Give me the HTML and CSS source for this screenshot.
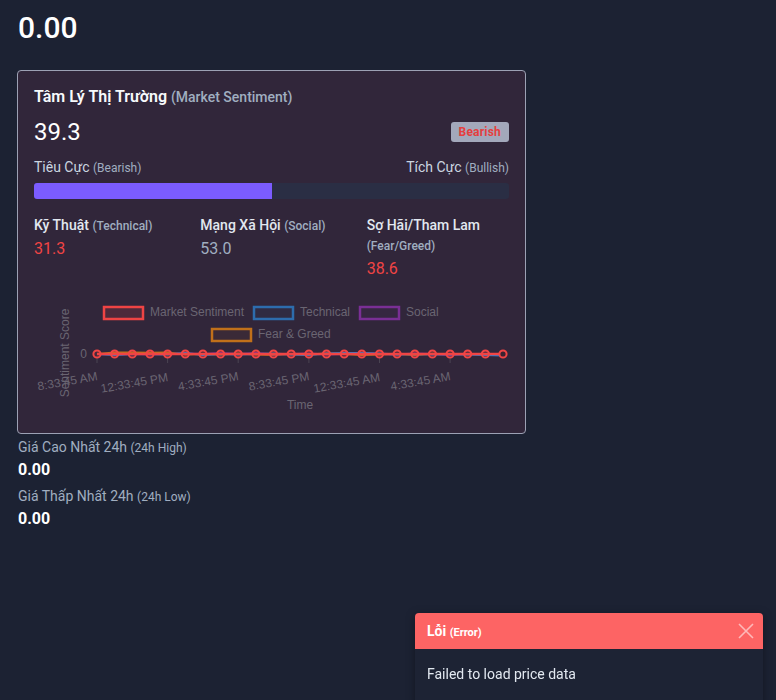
FILE: index.html
```html
<!DOCTYPE html>
<html lang="vi">
<head>
<meta charset="utf-8">
<title>Market</title>
<link rel="stylesheet" href="styles.css">
</head>
<body>
<main class="page">
  <h1 class="price">0.00</h1>

  <section class="card">
    <h2 class="card-title">Tâm Lý Thị Trường <span class="sub">(Market Sentiment)</span></h2>
    <div class="score-row">
      <span class="score">39.3</span>
      <span class="badge">Bearish</span>
    </div>
    <div class="scale-labels">
      <span>Tiêu Cực <small>(Bearish)</small></span>
      <span>Tích Cực <small>(Bullish)</small></span>
    </div>
    <div class="bar"><div class="bar-fill" style="width:50.1%"></div></div>

    <div class="metrics">
      <div class="metric">
        <div class="metric-label">Kỹ Thuật <small>(Technical)</small></div>
        <div class="metric-value red">31.3</div>
      </div>
      <div class="metric">
        <div class="metric-label">Mạng Xã Hội <small>(Social)</small></div>
        <div class="metric-value gray">53.0</div>
      </div>
      <div class="metric">
        <div class="metric-label">Sợ Hãi/Tham Lam <small>(Fear/Greed)</small></div>
        <div class="metric-value red">38.6</div>
      </div>
    </div>

    <svg class="chart" width="475" height="126" viewBox="0 0 475 126" xmlns="http://www.w3.org/2000/svg">
      <g font-family="Liberation Sans, Arial, sans-serif" font-size="12" fill="#6a6572">
        <rect x="70" y="16" width="39" height="12" fill="rgba(240,70,70,0.15)" stroke="#ef4444" stroke-width="2.5"/>
        <text x="116" y="25">Market Sentiment</text>
        <rect x="220" y="16" width="39" height="12" fill="rgba(40,100,170,0.08)" stroke="#2d6cad" stroke-width="2.5"/>
        <text x="266" y="25">Technical</text>
        <rect x="326" y="16" width="39" height="12" fill="rgba(120,50,150,0.08)" stroke="#7a2f95" stroke-width="2.5"/>
        <text x="372" y="25">Social</text>
        <rect x="178" y="38" width="39" height="12" fill="rgba(200,120,20,0.06)" stroke="#c0701a" stroke-width="2.5"/>
        <text x="224" y="47">Fear &amp; Greed</text>

        <text x="53" y="67" text-anchor="end">0</text>
        <text transform="translate(35 62) rotate(-90)" text-anchor="middle">Sentiment Score</text>
        <text x="266" y="118" text-anchor="middle">Time</text>

        <g text-anchor="end">
          <text transform="translate(64 89) rotate(-10)">8:33:45 AM</text>
          <text transform="translate(134.6 90) rotate(-10)">12:33:45 PM</text>
          <text transform="translate(205.2 89) rotate(-10)">4:33:45 PM</text>
          <text transform="translate(275.9 89) rotate(-10)">8:33:45 PM</text>
          <text transform="translate(346.5 90) rotate(-10)">12:33:45 AM</text>
          <text transform="translate(417.1 89) rotate(-10)">4:33:45 AM</text>
        </g>
      </g>
      <g stroke="#4a4452" stroke-width="1">
        <line x1="63" y1="66" x2="63" y2="72"/>
        <line x1="133.6" y1="66" x2="133.6" y2="72"/>
        <line x1="204.2" y1="66" x2="204.2" y2="72"/>
        <line x1="274.9" y1="66" x2="274.9" y2="72"/>
        <line x1="345.5" y1="66" x2="345.5" y2="72"/>
        <line x1="416.1" y1="66" x2="416.1" y2="72"/>
      </g>
      <g fill="none" stroke-width="2" stroke-linejoin="round">
        <polyline stroke="#c0701a" points="63,63 80.6,61.5 98.3,61.5 116,61.8 133.6,61.5 151.3,63.5 168.9,63 186.6,63.5 204.2,62.5 221.9,63.5 239.5,64 257.2,63 274.9,63.5 292.5,62.5 310.2,63 327.8,64 345.5,63.5 363.1,63 380.8,64 398.4,62.8 416.1,63.5 433.7,63 451.4,63.2 469,63"/>
        <polyline stroke="#7a2f95" points="63,63 80.6,63.5 98.3,63 116,63.5 133.6,63 151.3,62.5 168.9,63 186.6,62 204.2,63 221.9,62 239.5,63.5 257.2,63 274.9,62.5 292.5,63.5 310.2,63 327.8,62.5 345.5,63 363.1,63.5 380.8,62.5 398.4,63 416.1,64 433.7,63 451.4,63.5 469,63"/>
        <polyline stroke="#2d7fcf" points="63,63 80.6,64 98.3,63 116,63 133.6,63.5 151.3,62 168.9,64 186.6,63 204.2,63.5 221.9,63 239.5,62.5 257.2,63.5 274.9,64 292.5,62.5 310.2,62 327.8,62 345.5,62.5 363.1,63.5 380.8,63 398.4,63.5 416.1,63 433.7,63.5 451.4,64 469,64.5"/>
        <polyline stroke="#f04545" stroke-width="2.5" points="63,63 80.6,63 98.3,63 116,63 133.6,63 151.3,63 168.9,63 186.6,63 204.2,63 221.9,63 239.5,63 257.2,63 274.9,63 292.5,63 310.2,63 327.8,63 345.5,63 363.1,63 380.8,63 398.4,63 416.1,63 433.7,63 451.4,63 469,63"/>
      </g>
      <g fill="rgba(240,69,69,0.12)" stroke="#f04545" stroke-width="2">
        <circle cx="63" cy="63" r="3.6"/><circle cx="80.6" cy="63" r="3.6"/><circle cx="98.3" cy="63" r="3.6"/><circle cx="116" cy="63" r="3.6"/>
        <circle cx="133.6" cy="63" r="3.6"/><circle cx="151.3" cy="63" r="3.6"/><circle cx="168.9" cy="63" r="3.6"/><circle cx="186.6" cy="63" r="3.6"/>
        <circle cx="204.2" cy="63" r="3.6"/><circle cx="221.9" cy="63" r="3.6"/><circle cx="239.5" cy="63" r="3.6"/><circle cx="257.2" cy="63" r="3.6"/>
        <circle cx="274.9" cy="63" r="3.6"/><circle cx="292.5" cy="63" r="3.6"/><circle cx="310.2" cy="63" r="3.6"/><circle cx="327.8" cy="63" r="3.6"/>
        <circle cx="345.5" cy="63" r="3.6"/><circle cx="363.1" cy="63" r="3.6"/><circle cx="380.8" cy="63" r="3.6"/><circle cx="398.4" cy="63" r="3.6"/>
        <circle cx="416.1" cy="63" r="3.6"/><circle cx="433.7" cy="63" r="3.6"/><circle cx="451.4" cy="63" r="3.6"/><circle cx="469" cy="63" r="3.6" fill="#3a2330"/>
      </g>
    </svg>
  </section>

  <div class="stat">
    <div class="stat-label">Giá Cao Nhất 24h <small>(24h High)</small></div>
    <div class="stat-value">0.00</div>
  </div>
  <div class="stat">
    <div class="stat-label">Giá Thấp Nhất 24h <small>(24h Low)</small></div>
    <div class="stat-value">0.00</div>
  </div>
</main>

<div class="toast" role="alert">
  <div class="toast-head">
    <span class="toast-title">Lỗi <small>(Error)</small></span>
    <svg class="toast-close" width="16" height="16" viewBox="0 0 16 16" xmlns="http://www.w3.org/2000/svg">
      <path d="M1 1 L15 15 M15 1 L1 15" stroke="rgba(255,255,255,0.55)" stroke-width="1.6" fill="none"/>
    </svg>
  </div>
  <div class="toast-body">Failed to load price data</div>
</div>
</body>
</html>
```

FILE: styles.css
```css
* { box-sizing: border-box; }
html, body { margin: 0; padding: 0; }
body {
  background: #1c2233;
  color: #e2e8f0;
  font-family: Roboto, "Noto Sans", "Liberation Sans", sans-serif;
  height: 700px;
  overflow: hidden;
}
.page {
  padding: 10px 17px 0 17px;
  width: 526px;
}
.price {
  margin: 0 0 24px 1px;
  font-size: 30px;
  line-height: 36px;
  font-weight: 500;
  color: #ffffff;
}
.card {
  background: #31263a;
  border: 1px solid #9ca1b4;
  border-radius: 4px;
  padding: 14px 16px 16px 16px;
  width: 509px;
}
.card-title {
  margin: 0;
  font-size: 16px;
  line-height: 24px;
  font-weight: 600;
  color: #f7fafc;
}
.card-title .sub {
  font-size: 14px;
  font-weight: 500;
  color: #a0aec0;
}
.score-row {
  margin-top: 8px;
  height: 30px;
  display: flex;
  justify-content: space-between;
  align-items: center;
}
.score {
  font-size: 24px;
  line-height: 30px;
  color: #ffffff;
}
.badge {
  background: #a3a8bb;
  color: #e53e3e;
  font-size: 12px;
  font-weight: 700;
  line-height: 20px;
  padding: 0 8px;
  border-radius: 3px;
  letter-spacing: 0.2px;
}
.scale-labels {
  margin-top: 10px;
  display: flex;
  justify-content: space-between;
  font-size: 14px;
  line-height: 20px;
  color: #cbd5e0;
}
small {
  font-size: 12px;
  color: #a0aec0;
}
.bar {
  margin-top: 5px;
  height: 16px;
  background: #2a2e44;
  border-radius: 3px;
  overflow: hidden;
}
.bar-fill {
  height: 100%;
  background: #7b5cff;
}
.metrics {
  margin-top: 16px;
  display: grid;
  grid-template-columns: repeat(3, 1fr);
  column-gap: 24px;
}
.metric-label {
  font-size: 14px;
  line-height: 20px;
  font-weight: 500;
  color: #e2e8f0;
}
.metric-value {
  font-size: 16px;
  line-height: 24px;
  margin-top: 1px;
}
.red { color: #f04444; }
.gray { color: #a0aec0; }
.chart {
  display: block;
  margin-top: 10px;
}
.stat-label {
  margin-top: 3px;
  font-size: 14px;
  line-height: 20px;
  color: #a0aec0;
  padding-left: 1px;
}
.stat + .stat .stat-label { margin-top: 4px; }
.stat-value {
  font-size: 16px;
  line-height: 24px;
  font-weight: 700;
  color: #ffffff;
  padding-left: 1px;
}
.toast {
  position: fixed;
  left: 415px;
  top: 613px;
  width: 348px;
  border-radius: 4px 4px 0 0;
  overflow: hidden;
  box-shadow: 0 2px 10px rgba(0,0,0,0.35);
}
.toast-head {
  background: #fd6464;
  height: 36px;
  display: flex;
  align-items: center;
  justify-content: space-between;
  padding: 0 9px 0 12px;
}
.toast-title {
  font-size: 14px;
  font-weight: 700;
  color: #ffffff;
}
.toast-title small {
  font-size: 11px;
  color: #ffffff;
  font-weight: 700;
}
.toast-close { display: block; }
.toast-body {
  background: #1d2334;
  height: 60px;
  padding: 15px 12px 13px;
  font-size: 14px;
  line-height: 20px;
  color: #e2e8f0;
}
```
